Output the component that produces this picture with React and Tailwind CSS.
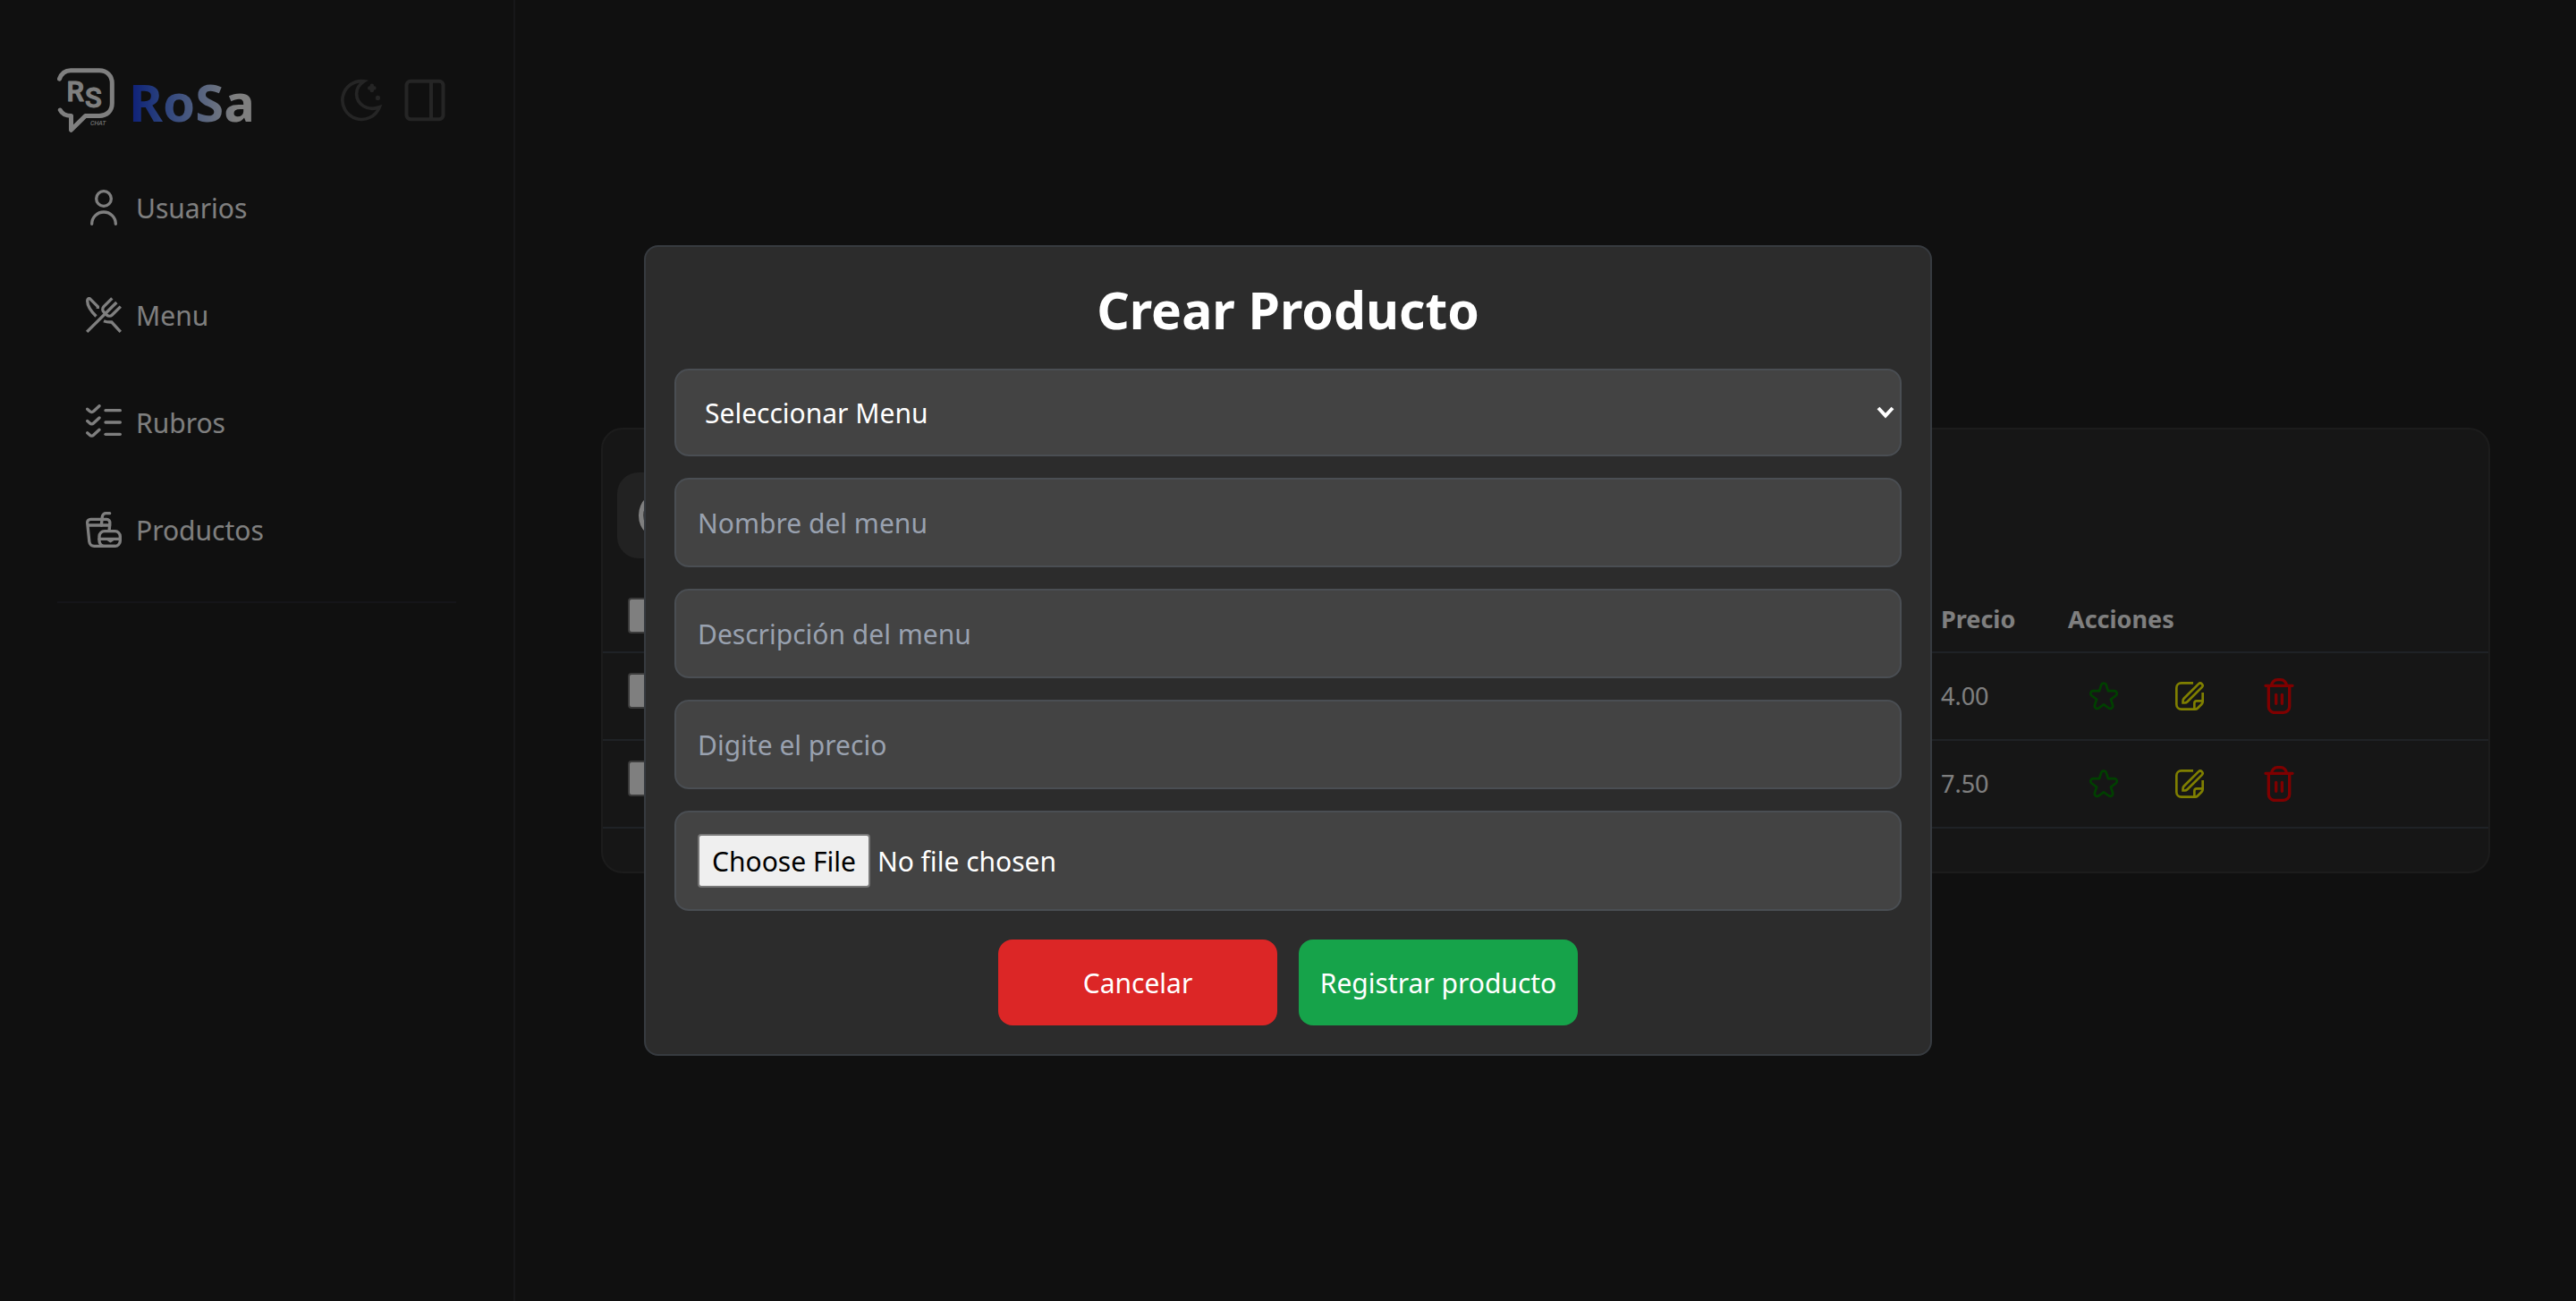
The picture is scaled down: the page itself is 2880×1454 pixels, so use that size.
const STAR =
  "M23.836,8.794a3.179,3.179,0,0,0-3.067-2.226H16.4L15.073,2.432a3.227,3.227,0,0,0-6.146,0L7.6,6.568H3.231a3.227,3.227,0,0,0-1.9,5.832L4.887,15,3.535,19.187A3.178,3.178,0,0,0,4.719,22.8a3.177,3.177,0,0,0,3.8-.019L12,20.219l3.482,2.559a3.227,3.227,0,0,0,4.983-3.591L19.113,15l3.56-2.6A3.177,3.177,0,0,0,23.836,8.794Zm-2.343,1.991-4.144,3.029a1,1,0,0,0-.362,1.116L18.562,19.8a1.227,1.227,0,0,1-1.895,1.365l-4.075-3a1,1,0,0,0-1.184,0l-4.075,3a1.227,1.227,0,0,1-1.9-1.365L7.013,14.93a1,1,0,0,0-.362-1.116L2.507,10.785a1.227,1.227,0,0,1,.724-2.217h5.1a1,1,0,0,0,.952-.694l1.55-4.831a1.227,1.227,0,0,1,2.336,0l1.55,4.831a1,1,0,0,0,.952.694h5.1a1.227,1.227,0,0,1,.724,2.217Z";

function Line({ className, width = 2, children }) {
  return (
    <svg
      viewBox="0 0 24 24"
      className={className}
      fill="none"
      stroke="currentColor"
      strokeWidth={width}
      strokeLinecap="round"
      strokeLinejoin="round"
      aria-hidden="true"
    >
      {children}
    </svg>
  );
}

function UserIcon() {
  return (
    <Line className="size-10">
      <circle cx="12" cy="6" r="5" />
      <path d="M4 23a8 8 0 0 1 16 0" />
    </Line>
  );
}

function RestaurantIcon() {
  return (
    <svg viewBox="0 0 24 24" className="size-10" fill="none" stroke="currentColor" strokeWidth="2" aria-hidden="true">
      <path d="M.7 23.3 20.6 3.6" />
      <path d="M17.6 .8 12 6.4a2.6 2.6 0 0 0 0 3.6l2 2a2.6 2.6 0 0 0 3.6 0l5.7-5.6" />
      <path d="M8 7.8V6.4L2.9 1.3C2 .5 1 1.2 1 2.6c0 3.6 2.3 6.8 5.9 10.3" />
      <path d="M12 16c1.7.7 3.4.9 5.3.8l6 6.5" />
    </svg>
  );
}

function ListCheckIcon() {
  return (
    <Line className="size-10">
      {[0, 8, 16].map((y) => (
        <g key={y} transform={`translate(0 ${y})`}>
          <path d="M1 3.1 2.7 4.6a1.7 1.7 0 0 0 2.4 0L9 1" />
          <path d="M13.2 4H23" />
        </g>
      ))}
    </Line>
  );
}

function BurgerSodaIcon() {
  return (
    <Line className="size-10">
      <path d="M16 1h-2.5a2.5 2.5 0 0 0-2.5 2.2L10.4 9" />
      <path d="M1.2 9H16l.1-1.6A2.2 2.2 0 0 0 14 5H3.2A2.2 2.2 0 0 0 1 7.3L2.3 20a3.4 3.4 0 0 0 3.4 3H19.5" />
      <path d="M16 9l-.3 3" />
      <path d="M9 18v-1.500A3.500 3.500 0 0 1 12.500 13h7a3.500 3.500 0 0 1 3.500 3.500v3a3.500 3.500 0 0 1-3.500 3.500h-7A3.500 3.500 0 0 1 9 19.500z" />
      <path d="M9 18.200h14" />
      <path d="M14 18.500h5l-2.500 1.700z" fill="currentColor" stroke="currentColor" strokeWidth="1" />
    </Line>
  );
}

function MoonIcon() {
  return (
    <svg viewBox="0 0 24 24" className="size-12" fill="none" stroke="currentColor" strokeWidth="1.8" aria-hidden="true">
      <path d="M13.5 1.4A10.7 10.7 0 1 0 22.1 15.9C15.5 18.4 9.5 14.3 9.3 8.7 9.2 5.6 10.9 3.1 13.5 1.4z" />
      <path d="M17.9 3.9v2.6M16.6 5.2h2.6" strokeWidth="2.2" strokeLinecap="round" />
      <circle cx="21.2" cy="10.7" r="1.3" fill="currentColor" stroke="none" />
    </svg>
  );
}

function SidebarIcon() {
  return (
    <Line className="size-12">
      <rect x="1.25" y="1.4" width="20.5" height="21.2" rx="2.2" />
      <path d="M15 1.4v21.2" strokeLinecap="butt" />
    </Line>
  );
}

function EditIcon() {
  return (
    <svg viewBox="0 0 24 24" className="size-8" fill="none" stroke="currentColor" strokeWidth="2" aria-hidden="true">
      <path d="M15 1H5a4 4 0 0 0-4 4v14a4 4 0 0 0 4 4h11.6a3 3 0 0 0 2.1-.9l3.4-3.4a3 3 0 0 0 .9-2.1V9" />
      <path d="M16 23v-5a2 2 0 0 1 2-2h5" />
      <path d="M6.4 17.6v-1.5c0-.9.3-1.6.9-2.2L19.5 1.8a2 2 0 0 1 2.8 0 2 2 0 0 1 0 2.8L10.1 16.7c-.6.6-1.3.9-2.2.9z" />
    </svg>
  );
}

function TrashIcon() {
  return (
    <Line className="size-10">
      <path d="M3 5h18M5 5v14a4 4 0 0 0 4 4h6a4 4 0 0 0 4-4V5M7 5a4 4 0 0 1 4-4h2a4 4 0 0 1 4 4M10 11v6M14 11v6" />
    </Line>
  );
}

function Logo() {
  return (
    <svg viewBox="0 0 64 72" className="h-[72px] w-16 text-white" role="img" aria-label="RS Chat">
      <path
        d="M2.5 12.2C4.5 6.5 8.5 2.7 15 2.7H47C55.5 2.7 61.3 8.5 61.3 17V39.5C61.3 48 55.5 53.4 47 53.4H31.5L15.5 69.3V53.4C9.500 53.4 5 50.5 3.3 47"
        fill="none"
        stroke="currentColor"
        strokeWidth="5"
        strokeLinecap="round"
        strokeLinejoin="round"
      />
      <g fill="currentColor" stroke="currentColor" strokeWidth="1" strokeLinejoin="round" fontFamily="Roboto, sans-serif" fontWeight="500">
        <text x="10.5" y="37" fontSize="31">R</text>
        <text x="31" y="43.500" fontSize="31">S</text>
      </g>
      <text x="37" y="63.8" fontSize="7" fontStyle="italic" fontFamily="Roboto, sans-serif" fill="currentColor">
        CHAT
      </text>
    </svg>
  );
}

const NAV = [
  { label: "Usuarios", Icon: UserIcon },
  { label: "Menu", Icon: RestaurantIcon },
  { label: "Rubros", Icon: ListCheckIcon },
  { label: "Productos", Icon: BurgerSodaIcon },
];

const PRICES = ["4.00", "7.50"];

const FIELD =
  "block w-full rounded-2xl border-2 border-[#4a4e53] bg-[#434343] text-[30px] text-white placeholder:text-gray-400";

const CHECK = "block size-10 appearance-none rounded-[4px] border-2 border-[#767676] bg-white";

function Sidebar() {
  return (
    <aside className="w-[576px] shrink-0 border-r-2 border-[#2e2e32] px-16 pt-16">
      <div className="flex h-24 items-center">
        <Logo />
        <span className="ml-4 bg-gradient-to-r from-[#1c37f0] to-white to-85% bg-clip-text pt-1 text-[58px] leading-[80px] font-bold text-transparent">
          RoSa
        </span>
        <div className="ml-auto flex gap-6 pr-2.5 text-[#4a4a4a]">
          <button type="button" aria-label="Modo oscuro">
            <MoonIcon />
          </button>
          <button type="button" aria-label="Panel lateral">
            <SidebarIcon />
          </button>
        </div>
      </div>
      <nav className="mt-6 flex flex-col gap-6 border-b-2 border-[#2b2b32] pb-8">
        {NAV.map(({ label, Icon }) => (
          <a key={label} href="#" className="flex h-24 items-center gap-4 px-8 text-[30px] text-white">
            <Icon />
            {label}
          </a>
        ))}
      </nav>
    </aside>
  );
}

function ProductTable() {
  return (
    <section className="w-full rounded-3xl border-2 border-[#383838] bg-[#2d2d2d] py-12">
      <label className="mx-4 flex h-24 w-[600px] items-center rounded-3xl bg-[#444444] px-6 text-white">
        <Line className="size-16" width={2}>
          <circle cx="10.5" cy="12" r="9.5" />
          <path d="m17.5 18.5 5 5" />
        </Line>
        <input type="search" aria-label="Buscar" className="min-w-0 flex-1 bg-transparent outline-none" />
      </label>
      <table className="mt-6 w-full table-fixed border-collapse text-left text-[27px] text-white">
        <thead>
          <tr className="h-[81px] border-b-2 border-[#3f454c]">
            <th className="pl-7">
              <input type="checkbox" aria-label="Seleccionar todo" className={CHECK} />
            </th>
            <th className="w-[144px] pt-2 pl-0.5 font-bold">Precio</th>
            <th className="w-[470px] pt-2 font-bold">Acciones</th>
          </tr>
        </thead>
        <tbody>
          {PRICES.map((price) => (
            <tr key={price} className="h-[98px] border-b-2 border-[#3f454c]">
              <td className="pb-3 pl-7">
                <input type="checkbox" aria-label={`Seleccionar ${price}`} className={CHECK} />
              </td>
              <td className="pl-0.5">{price}</td>
              <td>
                <div className="flex items-center gap-16 pl-6">
                  <button type="button" aria-label="Destacar" className="text-[#008000]">
                    <svg viewBox="0 0 24 24" className="size-8" fill="currentColor" aria-hidden="true">
                      <path d={STAR} />
                    </svg>
                  </button>
                  <button type="button" aria-label="Editar" className="text-[#ffff00]">
                    <EditIcon />
                  </button>
                  <button type="button" aria-label="Eliminar" className="text-[#ff0000]">
                    <TrashIcon />
                  </button>
                </div>
              </td>
            </tr>
          ))}
        </tbody>
      </table>
    </section>
  );
}

function CreateProductDialog() {
  return (
    <div className="fixed inset-0 flex items-center justify-center bg-black/50">
      <form
        role="dialog"
        aria-modal="true"
        aria-labelledby="dialog-title"
        className="flex w-1/2 flex-col rounded-2xl border-2 border-[#373b40] bg-[#2c2c2c] p-8"
      >
        <h2 id="dialog-title" className="mb-7 text-center text-[57px] leading-[76px] font-bold text-white">
          Crear Producto
        </h2>
        <div className="flex flex-col gap-6">
          <div className="relative">
            <select aria-label="Menu" className={`${FIELD} h-[98px] appearance-none px-8`}>
              <option>Seleccionar Menu</option>
            </select>
            <svg
              viewBox="0 0 20 14"
              className="pointer-events-none absolute top-[42px] right-2 h-3.5 w-5 text-white"
              fill="none"
              stroke="currentColor"
              strokeWidth="4"
              aria-hidden="true"
            >
              <path d="M2 2l8 8.5L18 2" />
            </svg>
          </div>
          <input type="text" aria-label="Nombre" placeholder="Nombre del menu" className={`${FIELD} h-[100px] px-6`} />
          <input type="text" aria-label="Descripción" placeholder="Descripción del menu" className={`${FIELD} h-[100px] px-6`} />
          <input type="text" aria-label="Precio" placeholder="Digite el precio" className={`${FIELD} h-[100px] px-6`} />
          <input
            type="file"
            aria-label="Imagen"
            className={`${FIELD} h-[112px] px-6 py-6 file:mr-2 file:h-[60px] file:rounded-[4px] file:border-2 file:border-solid file:border-[#767676] file:bg-[#efefef] file:px-3.5 file:text-black`}
          />
        </div>
        <div className="mt-8 flex justify-center gap-6 text-[30px] text-white">
          <button type="button" className="h-24 w-[312px] rounded-2xl bg-[#dc2626]">
            Cancelar
          </button>
          <button type="submit" className="h-24 w-[312px] rounded-2xl bg-[#16a34a]">
            Registrar producto
          </button>
        </div>
      </form>
    </div>
  );
}

export default function App() {
  return (
    <div className="flex min-h-screen bg-[#202020] font-['Noto_Sans','Open_Sans',sans-serif]">
      <Sidebar />
      <main className="flex flex-1 items-center px-24">
        <ProductTable />
      </main>
      <CreateProductDialog />
    </div>
  );
}
